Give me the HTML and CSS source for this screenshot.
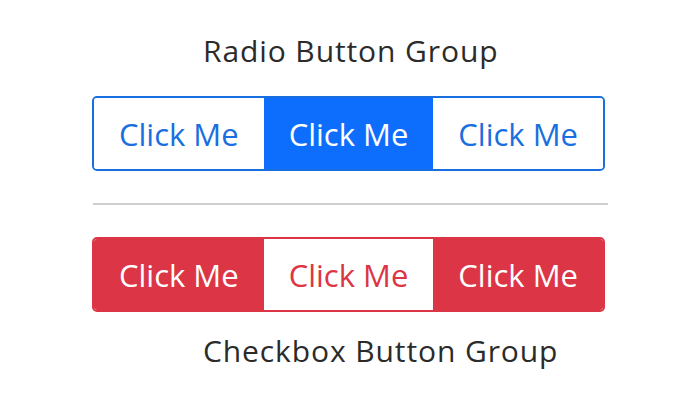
FILE: index.html
```html
<!DOCTYPE html>
<html lang="en">
  <head>
    <meta charset="UTF-8" />
    <meta name="viewport" content="width=device-width, initial-scale=1.0" />
    <title>Button Groups</title>
    <link rel="stylesheet" href="styles.css">
  </head>
  <body>
    <div class="container">
      <h2 class="group-title">Radio Button Group</h2>
      <div class="btn-group primary">
        <button class="btn">Click Me</button>
        <button class="btn active">Click Me</button>
        <button class="btn">Click Me</button>
      </div>

      <hr class="divider" />

      <div class="btn-group danger">
        <button class="btn active">Click Me</button>
        <button class="btn">Click Me</button>
        <button class="btn active">Click Me</button>
      </div>
      <h2 class="group-title bottom">Checkbox Button Group</h2>
    </div>
  </body>
</html>
```

FILE: styles.css
```css
body {
  margin: 0;
  font-family: "Open Sans", "Noto Sans", sans-serif;
  background-color: white;
}
.container {
  width: 513px;
  padding: 33px 0 0 92px;
}
.group-title {
  margin: 0 0 27px 111px;
  font-size: 30px;
  line-height: 36px;
  font-weight: normal;
  letter-spacing: 0.9px;
  color: #2b2b2b;
}
.group-title.bottom {
  margin: 21px 0 0 111px;
}
.btn-group {
  display: flex;
  height: 75px;
  box-sizing: border-box;
  border: 2px solid;
  border-radius: 5px;
  overflow: hidden;
}
.btn {
  flex: 1;
  margin: 0;
  padding: 1px 0 0;
  border: none;
  background-color: white;
  font-family: inherit;
  font-size: 31px;
  cursor: pointer;
}
.primary {
  border-color: #1a6fe0;
}
.primary .btn {
  color: #1a6fe0;
}
.primary .btn.active {
  background-color: #0d6efd;
  color: white;
}
.danger {
  border-color: #dc3545;
}
.danger .btn {
  color: #dc3545;
}
.danger .btn.active {
  background-color: #dc3545;
  color: white;
}
.divider {
  width: 515px;
  margin: 32px 0 32px 1px;
  border: none;
  border-top: 2px solid #cfcfcf;
}
```
